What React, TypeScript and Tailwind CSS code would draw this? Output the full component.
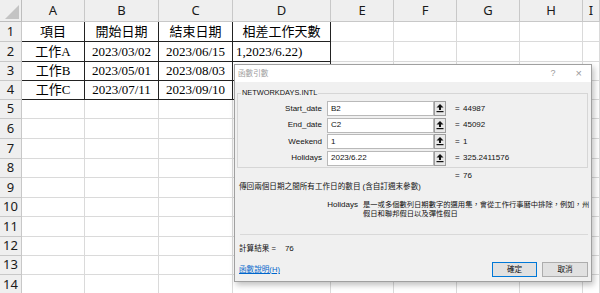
import React from 'react';

const cols = ['A', 'B', 'C', 'D', 'E', 'F', 'G', 'H', 'I'];

const rowHeights = [
  'h-[20px]', 'h-[20px]', 'h-[19px]', 'h-[19px]', 'h-[19px]', 'h-[20px]', 'h-[20px]',
  'h-[19px]', 'h-[20px]', 'h-[19px]', 'h-[20px]', 'h-[19px]', 'h-[19px]', 'h-[20px]',
];

const data: string[][] = [
  ['項目', '開始日期', '結束日期', '相差工作天數'],
  ['工作A', '2023/03/02', '2023/06/15', '1,2023/6.22)'],
  ['工作B', '2023/05/01', '2023/08/03', ''],
  ['工作C', '2023/07/11', '2023/09/10', ''],
];

const args = [
  { label: 'Start_date', value: 'B2', result: '44987' },
  { label: 'End_date', value: 'C2', result: '45092' },
  { label: 'Weekend', value: '1', result: '1' },
  { label: 'Holidays', value: '2023/6.22', result: '325.2411576' },
];

const RefIcon = () => (
  <svg width="8" height="9" viewBox="0 0 8 9">
    <polygon points="4,0 7.5,3.5 0.5,3.5" fill="#111" />
    <rect x="3" y="3" width="2" height="3" fill="#111" />
    <rect x="0.5" y="7" width="7" height="1.2" fill="#111" />
  </svg>
);

const Sheet = () => (
  <div className="grid grid-cols-[22px_63px_74px_74px_98px_63px_63px_63px_63px_1fr]">
    {/* header row */}
    <div className="h-[22px] bg-[#efefef] border-r border-b border-[#bdbdbd] flex items-end justify-end p-[2px]">
      <svg width="14" height="14" viewBox="0 0 14 14">
        <polygon points="14,0 14,14 0,14" fill="#c4c4c4" />
      </svg>
    </div>
    {cols.map((c) => (
      <div
        key={c}
        className="h-[22px] bg-[#efefef] border-r border-b border-[#c8c8c8] flex items-center justify-center text-[13px] text-[#1a1a1a] font-['Noto_Sans',sans-serif]"
      >
        {c}
      </div>
    ))}
    {rowHeights.map((h, r) => (
      <React.Fragment key={r}>
        <div
          className={`${h} bg-[#efefef] border-r border-b border-[#c8c8c8] flex items-center justify-center text-[13px] text-[#1a1a1a] font-['Noto_Sans',sans-serif]`}
        >
          {r + 1}
        </div>
        {cols.map((c, ci) => {
          const inTable = r < 4 && ci < 4;
          const text = inTable ? data[r][ci] : '';
          const left = r === 1 && ci === 3;
          return (
            <div
              key={c}
              className={`${h} border-r border-b flex items-center overflow-hidden whitespace-nowrap text-[13px] text-black font-['Liberation_Serif','Noto_Sans_CJK_TC',serif] ${
                inTable ? 'border-[#222]' : 'border-[#dadada]'
              } ${left ? 'justify-start pl-[3px]' : 'justify-center'}`}
            >
              {text}
            </div>
          );
        })}
      </React.Fragment>
    ))}
  </div>
);

const Dialog = () => (
  <div className="absolute left-[234px] top-[64px] w-[358px] h-[218px] border border-[#a0a0a0] bg-[#f0f0f0] shadow-[2px_3px_6px_rgba(0,0,0,0.25)] flex flex-col font-['Liberation_Sans','Noto_Sans_CJK_TC',sans-serif] text-[8px] text-[#111]">
    <div className="h-[17px] bg-white flex items-center pl-[3px] pr-[9px] text-[#9a9a9a]">
      <span className="text-[7.6px]">函數引數</span>
      <span className="ml-auto text-[9px]">?</span>
      <span className="ml-[20px] text-[11px] leading-none">×</span>
    </div>

    <fieldset className="mt-[6px] ml-[2px] mr-[3px] border border-[#d6d6d6] pb-[1px]">
      <legend className="ml-[3px] px-[1px] leading-[10px] text-[7.4px]">NETWORKDAYS.INTL</legend>
      <div className="flex flex-col gap-[1.6px] pt-[3px]">
        {args.map((a) => (
          <div key={a.label} className="flex items-center h-[15px]">
            <div className="w-[84px] text-right">{a.label}</div>
            <div className="ml-[5px] w-[107px] h-[15px] bg-white border border-[#b9b9b9] flex items-center pl-[3px]">
              {a.value}
            </div>
            <div className="w-[12px] h-[15px] border border-[#9e9e9e] bg-[#e8e8e8] flex items-center justify-center">
              <RefIcon />
            </div>
            <div className="ml-[9px] w-[8px]">=</div>
            <div>{a.result}</div>
          </div>
        ))}
      </div>
    </fieldset>

    <div className="mt-[2px] h-[12px] flex items-center pl-[220px]">
      <span className="w-[8px]">=</span>
      <span>76</span>
    </div>

    <div className="h-[10px] flex items-center pl-[4px] text-[7.6px]">
      傳回兩個日期之間所有工作日的數目 (含自訂週末參數)
    </div>

    <div className="mt-[8px] flex">
      <div className="w-[123px] text-right leading-[9px]">Holidays</div>
      <div className="ml-[5px] text-[7.3px] leading-[9px] whitespace-nowrap">
        是一或多個數列日期數字的選用集，會從工作行事曆中排除，例如，州
        <br />
        假日和聯邦假日以及彈性假日
      </div>
    </div>

    <div className="mt-[16px] ml-[5px] mr-[3px] border-t border-[#d9d9d9]" />

    <div className="mt-[8px] h-[12px] flex items-center pl-[4px]">
      <span className="text-[7.6px]">計算結果 =</span>
      <span className="ml-[9px]">76</span>
    </div>

    <div className="mt-[7px] flex items-center pl-[4px] pr-[3px]">
      <span className="text-[7.6px] text-[#0066cc] underline">函數說明(H)</span>
      <div className="ml-auto flex gap-[5px]">
        <div className="w-[45px] h-[15px] border border-[#0078d7] bg-[#e1e1e1] flex items-center justify-center text-[7.6px]">
          確定
        </div>
        <div className="w-[46px] h-[15px] border border-[#adadad] bg-[#e1e1e1] flex items-center justify-center text-[7.6px]">
          取消
        </div>
      </div>
    </div>
  </div>
);

const App: React.FC = () => {
  return (
    <div className="relative w-[600px] h-[293px] overflow-hidden bg-white">
      <Sheet />
      <Dialog />
    </div>
  );
};

export default App;
